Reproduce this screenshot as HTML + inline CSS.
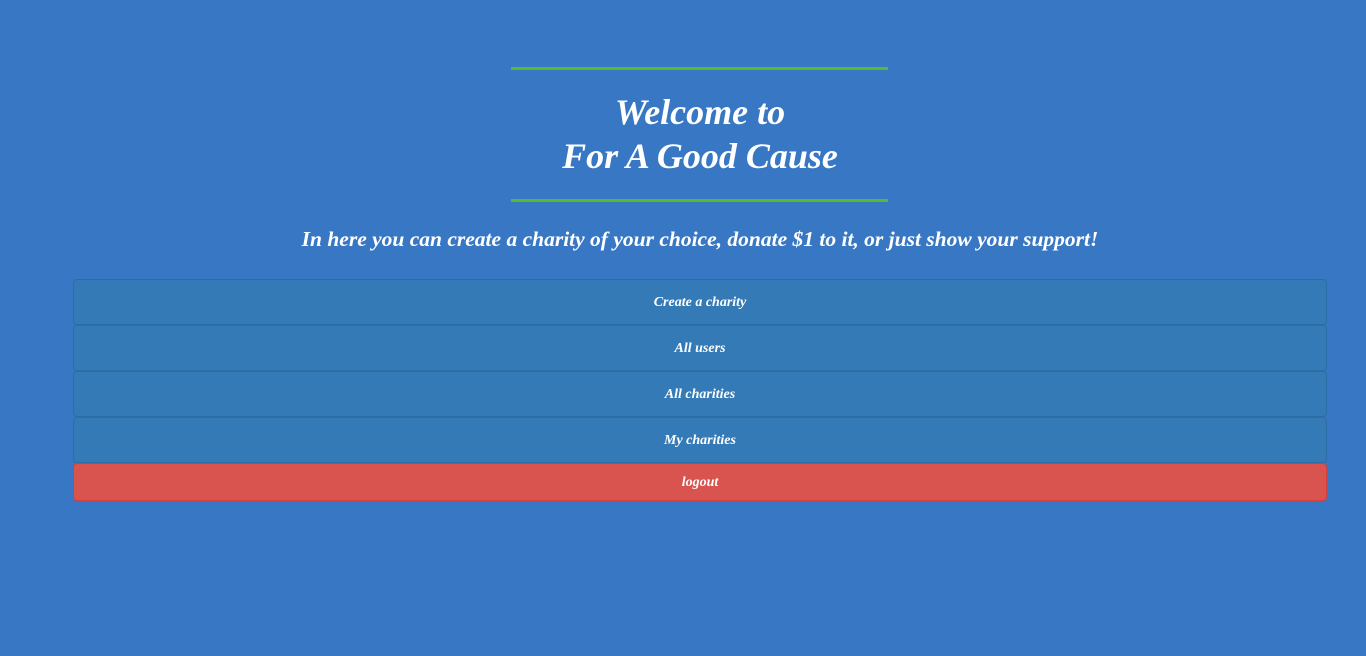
<!DOCTYPE html>
<html><head><style>
body{margin:0;background:#3777c3;width:1366px;height:656px;overflow:hidden;font-family:"Liberation Serif",serif;font-style:italic;font-weight:bold;color:#fff}
.hr{position:absolute;left:511px;width:377px;height:3px;background:#5cb82a}
h1{position:absolute;top:90px;left:73px;width:1254px;text-align:center;margin:0;font-size:36px;line-height:44px}
.sub{position:absolute;top:227px;left:73px;width:1254px;text-align:center;font-size:21.5px}
.b{position:absolute;left:73px;width:1252px;border:1px solid #2e6da4;background:#337ab7;border-radius:4px;text-align:center;font-size:14px;box-sizing:content-box}
.r{background:#d9534f;border-color:#d43f3a}
</style></head><body>
<div class="hr" style="top:67px"></div>
<h1>Welcome to<br>For A Good Cause</h1>
<div class="hr" style="top:199px"></div>
<div class="sub">In here you can create a charity of your choice, donate $1 to it, or just show your support!</div>
<div class="b" style="top:279px;height:44px;line-height:46px">Create a charity</div>
<div class="b" style="top:325px;height:44px;line-height:46px">All users</div>
<div class="b" style="top:371px;height:44px;line-height:46px">All charities</div>
<div class="b" style="top:417px;height:44px;line-height:46px">My charities</div>
<div class="b r" style="top:463px;height:36px;line-height:38px">logout</div>
</body></html>
